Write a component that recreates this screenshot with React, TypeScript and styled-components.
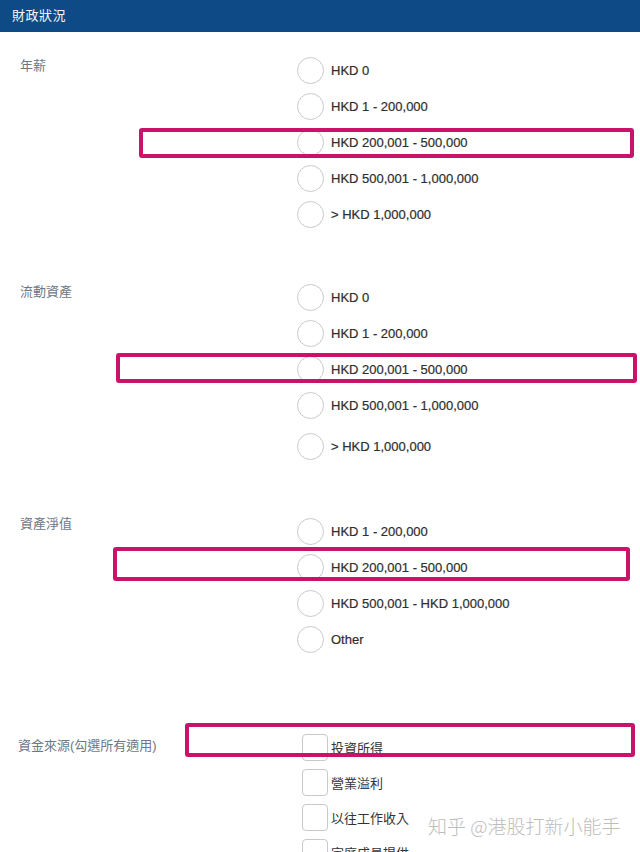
import React from "react";
import styled, { createGlobalStyle } from "styled-components";

const GlobalStyle = createGlobalStyle`
  html, body { margin: 0; padding: 0; background: #ffffff; }
  body {
    font-family: "Liberation Sans", Arial, "Noto Sans CJK TC", sans-serif;
    -webkit-font-smoothing: antialiased;
  }
  * { box-sizing: border-box; }
`;

const Page = styled.div`
  position: relative;
  width: 640px;
  height: 852px;
  overflow: hidden;
  background: #fff;
`;

const Header = styled.div`
  height: 32px;
  background: #0d4a86;
  display: flex;
  align-items: center;
  padding-left: 12px;
  padding-bottom: 3px;
  color: #f2f6fb;
  font-family: "Noto Sans CJK TC", sans-serif;
  font-size: 13px;
  letter-spacing: 0.5px;
`;

const Section = styled.section<{ $top: number }>`
  display: grid;
  grid-template-columns: 297px 1fr;
  margin-top: ${(p) => p.$top}px;
`;

const Label = styled.div<{ $offset: number; $left: number }>`
  padding-top: ${(p) => p.$offset}px;
  padding-left: ${(p) => p.$left}px;
  line-height: 20px;
  font-family: "Liberation Sans", Arial, "Noto Sans CJK TC", sans-serif;
  font-size: 13px;
  color: #6b7886;
`;

const Options = styled.div`
  display: flex;
  flex-direction: column;
`;

const Row = styled.div<{ $h: number; $extra?: number }>`
  position: relative;
  display: flex;
  align-items: center;
  height: ${(p) => p.$h}px;
  margin-top: ${(p) => p.$extra ?? 0}px;
`;

const Radio = styled.span`
  flex: none;
  width: 27px;
  height: 27px;
  border-radius: 50%;
  border: 1.5px solid #c9c9c9;
  background: #fff;
  margin-right: 7px;
`;

const Check = styled.span`
  flex: none;
  width: 26px;
  height: 27px;
  border-radius: 4px;
  border: 1.5px solid #c9c9c9;
  background: #fff;
  margin-left: 5px;
  margin-right: 3px;
`;

const OptionText = styled.span`
  font-family: "Liberation Sans", Arial, sans-serif;
  font-size: 13px;
  color: #2e2e2e;
  white-space: nowrap;
  -webkit-text-stroke: 0.2px #2e2e2e;
`;

const CheckText = styled.span`
  font-family: "Noto Sans CJK TC", sans-serif;
  font-size: 13px;
  color: #333;
  white-space: nowrap;
`;

const Highlight = styled.div`
  position: absolute;
  border: 4px solid #c9136b;
  border-radius: 3px;
  pointer-events: none;
`;

const Watermark = styled.div`
  position: absolute;
  left: 428px;
  top: 812px;
  font-family: "Noto Sans CJK SC", sans-serif;
  font-weight: 300;
  font-size: 19px;
  color: #bdbdbd;
  white-space: nowrap;
`;

type Box = { left: number; top: number; width: number; height: number };
type Opt = { text: string; hl?: Box; extra?: number };
type Sec = {
  label: string;
  top: number;
  offset: number;
  labelLeft: number;
  kind: "radio" | "check";
  rowH: number;
  options: Opt[];
};

const sections: Sec[] = [
  {
    label: "年薪",
    top: 20,
    offset: 4,
    labelLeft: 20,
    kind: "radio",
    rowH: 36,
    options: [
      { text: "HKD 0" },
      { text: "HKD 1 - 200,000" },
      { text: "HKD 200,001 - 500,000", hl: { left: -158, top: 4, width: 495, height: 30 } },
      { text: "HKD 500,001 - 1,000,000" },
      { text: "> HKD 1,000,000" },
    ],
  },
  {
    label: "流動資產",
    top: 47,
    offset: 3,
    labelLeft: 20,
    kind: "radio",
    rowH: 36,
    options: [
      { text: "HKD 0" },
      { text: "HKD 1 - 200,000" },
      { text: "HKD 200,001 - 500,000", hl: { left: -181, top: 2, width: 521, height: 30 } },
      { text: "HKD 500,001 - 1,000,000" },
      { text: "> HKD 1,000,000", extra: 5 },
    ],
  },
  {
    label: "資產淨值",
    top: 49,
    offset: 1,
    labelLeft: 20,
    kind: "radio",
    rowH: 36,
    options: [
      { text: "HKD 1 - 200,000" },
      { text: "HKD 200,001 - 500,000", hl: { left: -184, top: -2, width: 517, height: 34 } },
      { text: "HKD 500,001 - HKD 1,000,000" },
      { text: "Other" },
    ],
  },
  {
    label: "資金來源(勾選所有適用)",
    top: 73,
    offset: 6,
    labelLeft: 18,
    kind: "check",
    rowH: 35,
    options: [
      { text: "投資所得", hl: { left: -112, top: -7, width: 450, height: 34 } },
      { text: "營業溢利" },
      { text: "以往工作收入" },
      { text: "家庭成員提供" },
    ],
  },
];

export default function App() {
  return (
    <>
      <GlobalStyle />
      <Page>
        <Header>財政狀況</Header>
        {sections.map((s) => (
          <Section key={s.label} $top={s.top}>
            <Label $offset={s.offset} $left={s.labelLeft}>
              {s.label}
            </Label>
            <Options>
              {s.options.map((o) => (
                <Row key={o.text} $h={s.rowH} $extra={o.extra}>
                  {s.kind === "radio" ? <Radio /> : <Check />}
                  {s.kind === "radio" ? (
                    <OptionText>{o.text}</OptionText>
                  ) : (
                    <CheckText>{o.text}</CheckText>
                  )}
                  {o.hl && (
                    <Highlight
                      style={{
                        left: o.hl.left,
                        top: o.hl.top,
                        width: o.hl.width,
                        height: o.hl.height,
                      }}
                    />
                  )}
                </Row>
              ))}
            </Options>
          </Section>
        ))}
        <Watermark>知乎 @港股打新小能手</Watermark>
      </Page>
    </>
  );
}
